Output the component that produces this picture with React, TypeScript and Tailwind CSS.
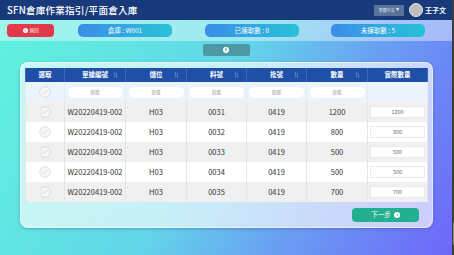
import React from "react";

const rows = [
  { doc: "W20220419-002", loc: "H03", part: "0031", lot: "0419", qty: "1200" },
  { doc: "W20220419-002", loc: "H03", part: "0032", lot: "0419", qty: "800" },
  { doc: "W20220419-002", loc: "H03", part: "0033", lot: "0419", qty: "500" },
  { doc: "W20220419-002", loc: "H03", part: "0034", lot: "0419", qty: "500" },
  { doc: "W20220419-002", loc: "H03", part: "0035", lot: "0419", qty: "700" },
];

const columns = [
  { label: "選取", w: "w-[39px]", sort: false },
  { label: "單據編號", w: "w-[61px]", sort: true },
  { label: "儲位", w: "w-[61px]", sort: true },
  { label: "料號", w: "w-[60px]", sort: true },
  { label: "批號", w: "w-[60px]", sort: true },
  { label: "數量", w: "w-[61px]", sort: true },
  { label: "實際數量", w: "w-[60px]", sort: false },
];

function CheckCircle() {
  return (
    <svg width="12" height="12" viewBox="0 0 24 24" className="mx-auto block">
      <circle cx="12" cy="12" r="10.5" fill="#f7f7f7" stroke="#d4d4d4" strokeWidth="1.5" />
      <path d="M7 12.5l3.3 3.2L17 8.8" fill="none" stroke="#d4d4d4" strokeWidth="1.8" strokeLinecap="round" strokeLinejoin="round" />
    </svg>
  );
}

function SortIcon() {
  return (
    <svg width="5" height="6" viewBox="0 0 10 12" className="absolute right-[7px] top-1/2 -translate-y-1/2">
      <path d="M3 11V1M1 3l2-2 2 2M7 1v10M5 9l2 2 2-2" fill="none" stroke="#7f9ad0" strokeWidth="1" />
    </svg>
  );
}

function FilterInput() {
  return (
    <div className="mx-auto flex h-[11px] w-[55px] items-center justify-center rounded-full bg-white text-[4.5px] text-[#9a9a9a]">
      篩選
    </div>
  );
}

function Pill({ text }: { text: string }) {
  return (
    <div className="flex h-[13px] w-[94px] items-center justify-center rounded-[5px] bg-linear-to-r from-[#3b8ce8] to-[#27c2d6] text-[6.5px] text-white">
      {text}
    </div>
  );
}

export default function App() {
  return (
    <div className="flex h-[255px] w-[454px] overflow-hidden font-['Noto_Sans_CJK_TC',sans-serif]">
      <div className="flex flex-1 flex-col">
        <header className="flex h-[20px] items-center bg-[#183a7b] pl-[7px] pr-[6px]">
          <h1 className="text-[9.6px] font-medium tracking-[0.2px] text-white">SFN倉庫作業指引/平面倉入庫</h1>
          <div className="ml-auto flex h-[11px] w-[30px] items-center justify-center gap-[1px] bg-[#5a7399] text-[4px] text-[#dfe6f0]">
            繁體中文 <span className="text-[3.5px]">▼</span>
          </div>
          <div className="ml-[5px] h-[14px] w-[14px] rounded-full border border-[#e8e8e8] bg-[#bdbdbd]" />
          <span className="ml-[2px] text-[7px] font-bold text-white">王子文</span>
        </header>

        <div className="flex flex-1 flex-col bg-[linear-gradient(118deg,#5ff2dd_0%,#62d6e9_45%,#6a9df3_70%,#6e66fa_100%)]">
          <div className="flex h-[21px] items-center bg-white/40 px-[7px]">
            <button className="flex h-[13px] w-[47px] items-center justify-center gap-[2px] rounded-[4px] bg-[#e23a4b] text-[4.5px] text-white">
              <svg width="5" height="5" viewBox="0 0 10 10">
                <circle cx="5" cy="5" r="5" fill="white" />
                <path d="M5.8 2.8L3.8 5l2 2.2" fill="none" stroke="#e23a4b" strokeWidth="1.3" />
              </svg>
              返回
            </button>
            <div className="ml-[24px]"><Pill text="倉庫 : W001" /></div>
            <div className="ml-[33px]"><Pill text="已揀取數 : 0" /></div>
            <div className="ml-[32px]"><Pill text="未揀取數 : 5" /></div>
          </div>

          <div className="mt-[3px] flex justify-center">
            <div className="flex h-[12px] w-[47px] items-center justify-center rounded-[2px] bg-[#4f97a3]">
              <svg width="6" height="6" viewBox="0 0 10 10">
                <circle cx="5" cy="5" r="5" fill="white" />
                <path d="M5 7.6V2.6M3 4.5L5 2.5l2 2" fill="none" stroke="#4f97a3" strokeWidth="1.3" />
              </svg>
            </div>
          </div>

          <div className="mx-[20px] mr-[19px] mt-[6px] rounded-[8px] border border-white/60 bg-white/65 px-[4px] pb-[5px] pt-[5px] shadow-[0_1px_3px_rgba(40,60,120,0.35)]">
            <table className="w-[402px] table-fixed border-collapse">
              <thead>
                <tr className="h-[14px] bg-[#1f4fa7]">
                  {columns.map((c) => (
                    <th key={c.label} className={`${c.w} relative border-x border-[#3f68b8] p-0 text-center text-[6.5px] font-bold text-white`}>
                      {c.label}
                      {c.sort && <SortIcon />}
                    </th>
                  ))}
                </tr>
              </thead>
              <tbody>
                <tr className="h-[20px] bg-[#eaf4fd]">
                  <td className="border-x border-[#e4ecf4]"><CheckCircle /></td>
                  <td className="border-x border-[#e4ecf4]"><FilterInput /></td>
                  <td className="border-x border-[#e4ecf4]"><FilterInput /></td>
                  <td className="border-x border-[#e4ecf4]"><FilterInput /></td>
                  <td className="border-x border-[#e4ecf4]"><FilterInput /></td>
                  <td className="border-x border-[#e4ecf4]"><FilterInput /></td>
                  <td className="border-x border-[#e4ecf4]" />
                </tr>
                {rows.map((r, i) => (
                  <tr key={r.part} className={`h-[20px] text-center text-[7.5px] text-[#333] ${i % 2 === 0 ? "bg-[#f0f0f0]" : "bg-white"}`}>
                    <td className="border-x border-[#e6e6e6]"><CheckCircle /></td>
                    <td className="border-x border-[#e6e6e6]">{r.doc}</td>
                    <td className="border-x border-[#e6e6e6]">{r.loc}</td>
                    <td className="border-x border-[#e6e6e6]">{r.part}</td>
                    <td className="border-x border-[#e6e6e6]">{r.lot}</td>
                    <td className="border-x border-[#e6e6e6]">{r.qty}</td>
                    <td className="border-x border-[#e6e6e6] px-[2px]">
                      <div className="flex h-[12px] items-center justify-center border border-[#ececec] bg-white text-[5.5px] text-[#666]">
                        {r.qty}
                      </div>
                    </td>
                  </tr>
                ))}
              </tbody>
            </table>
            <div className="mt-[6px] flex justify-end pr-[9px]">
              <button className="flex h-[14px] w-[67px] items-center justify-center gap-[3px] rounded-[4px] bg-[#22b08f] text-[6.5px] text-white">
                下一步
                <svg width="6" height="6" viewBox="0 0 10 10">
                  <circle cx="5" cy="5" r="5" fill="white" />
                  <path d="M4.2 2.8L6.2 5l-2 2.2" fill="none" stroke="#22b08f" strokeWidth="1.3" />
                </svg>
              </button>
            </div>
          </div>
        </div>
      </div>
      <div className="flex w-[5px] flex-col bg-[#3d3d3d]">
        <div className="mt-[222px] ml-[1px] h-[23px] w-[3px] rounded-full bg-[#8c8c8c]" />
      </div>
    </div>
  );
}
